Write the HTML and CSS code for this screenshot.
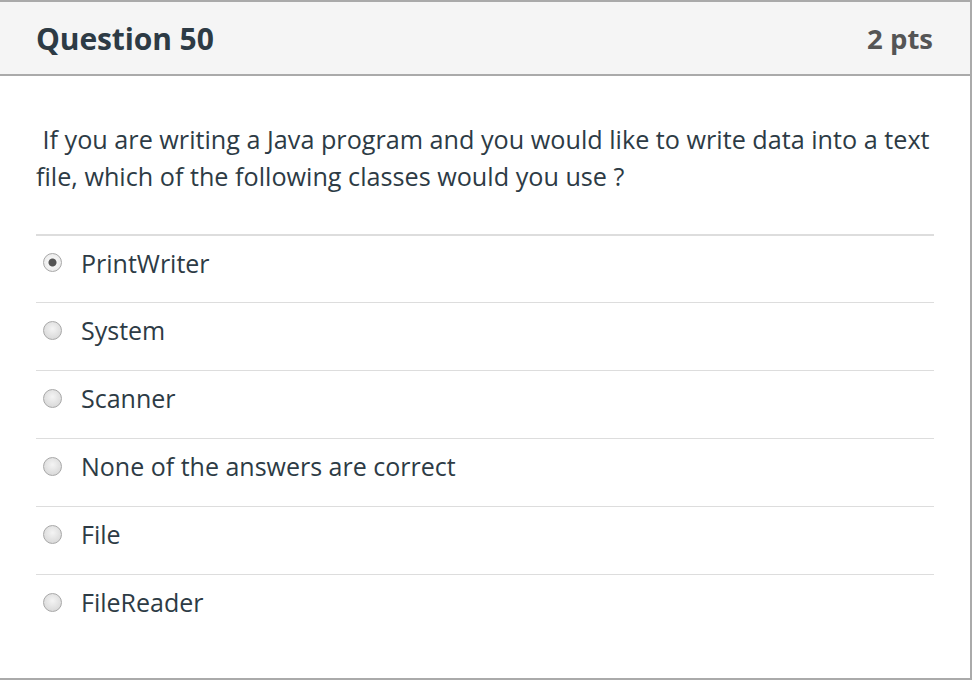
FILE: index.html
```html
<!DOCTYPE html>
<html>
<head>
<meta charset="utf-8">
<link rel="stylesheet" href="styles.css">
</head>
<body>
<div class="quiz">
  <div class="header">
    <h2 class="title">Question 50</h2>
    <div class="pts">2 pts</div>
  </div>
  <div class="content">
    <p class="question">&nbsp;If you are writing a Java program and you would like to write data into a text file, which of the following classes would you use ?</p>
    <div class="answers">
      <label class="answer"><span class="radio checked"></span><span class="text">PrintWriter</span></label>
      <label class="answer"><span class="radio"></span><span class="text">System</span></label>
      <label class="answer"><span class="radio"></span><span class="text">Scanner</span></label>
      <label class="answer"><span class="radio"></span><span class="text">None of the answers are correct</span></label>
      <label class="answer"><span class="radio"></span><span class="text">File</span></label>
      <label class="answer"><span class="radio"></span><span class="text">FileReader</span></label>
    </div>
  </div>
</div>
</body>
</html>
```
FILE: styles.css
```css
html, body {
  margin: 0;
  padding: 0;
  background: #fff;
}
body {
  font-family: "Open Sans", "Noto Sans", sans-serif;
  color: #2d3b45;
}
.quiz {
  width: 970px;
  height: 676px;
  border-top: 2px solid #aaa;
  border-right: 2px solid #aaa;
  border-bottom: 2px solid #aaa;
  display: flex;
  flex-direction: column;
}
.header {
  height: 72px;
  background: #f5f5f5;
  border-bottom: 2px solid #aaa;
  display: flex;
  align-items: center;
  justify-content: space-between;
  padding: 0 37px 0 36px;
}
.title {
  margin: 0;
  font-size: 30px;
  font-weight: 700;
  color: #2d3b45;
  letter-spacing: -0.1px;
}
.pts {
  font-size: 27.5px;
  font-weight: 700;
  color: #555;
}
.content {
  padding: 0 36px;
}
.question {
  margin: 45px 0 0 0;
  font-size: 25.2px;
  line-height: 37px;
  color: #2d3b45;
}
.answers {
  margin-top: 39px;
}
.answer {
  display: flex;
  align-items: center;
  border-top: 1.5px solid #ddd;
  padding-bottom: 13px;
  box-sizing: border-box;
  height: 68px;
}
.answer:first-child {
  border-top: 2px solid #ddd;
}
.radio {
  width: 19px;
  height: 19px;
  margin-left: 7px;
  margin-right: 19px;
  border-radius: 50%;
  box-sizing: border-box;
  border: 1px solid #a8a8a8;
  background: radial-gradient(circle at 50% 40%, #f4f4f4 0%, #dcdcdc 70%, #cfcfcf 100%);
}
.radio.checked {
  background: radial-gradient(circle at 50% 50%, #555 0 3.5px, #f5f5f5 4.5px, #e4e4e4 100%);
}
.text {
  font-size: 25px;
  line-height: 26px;
  color: #2d3b45;
}
```
